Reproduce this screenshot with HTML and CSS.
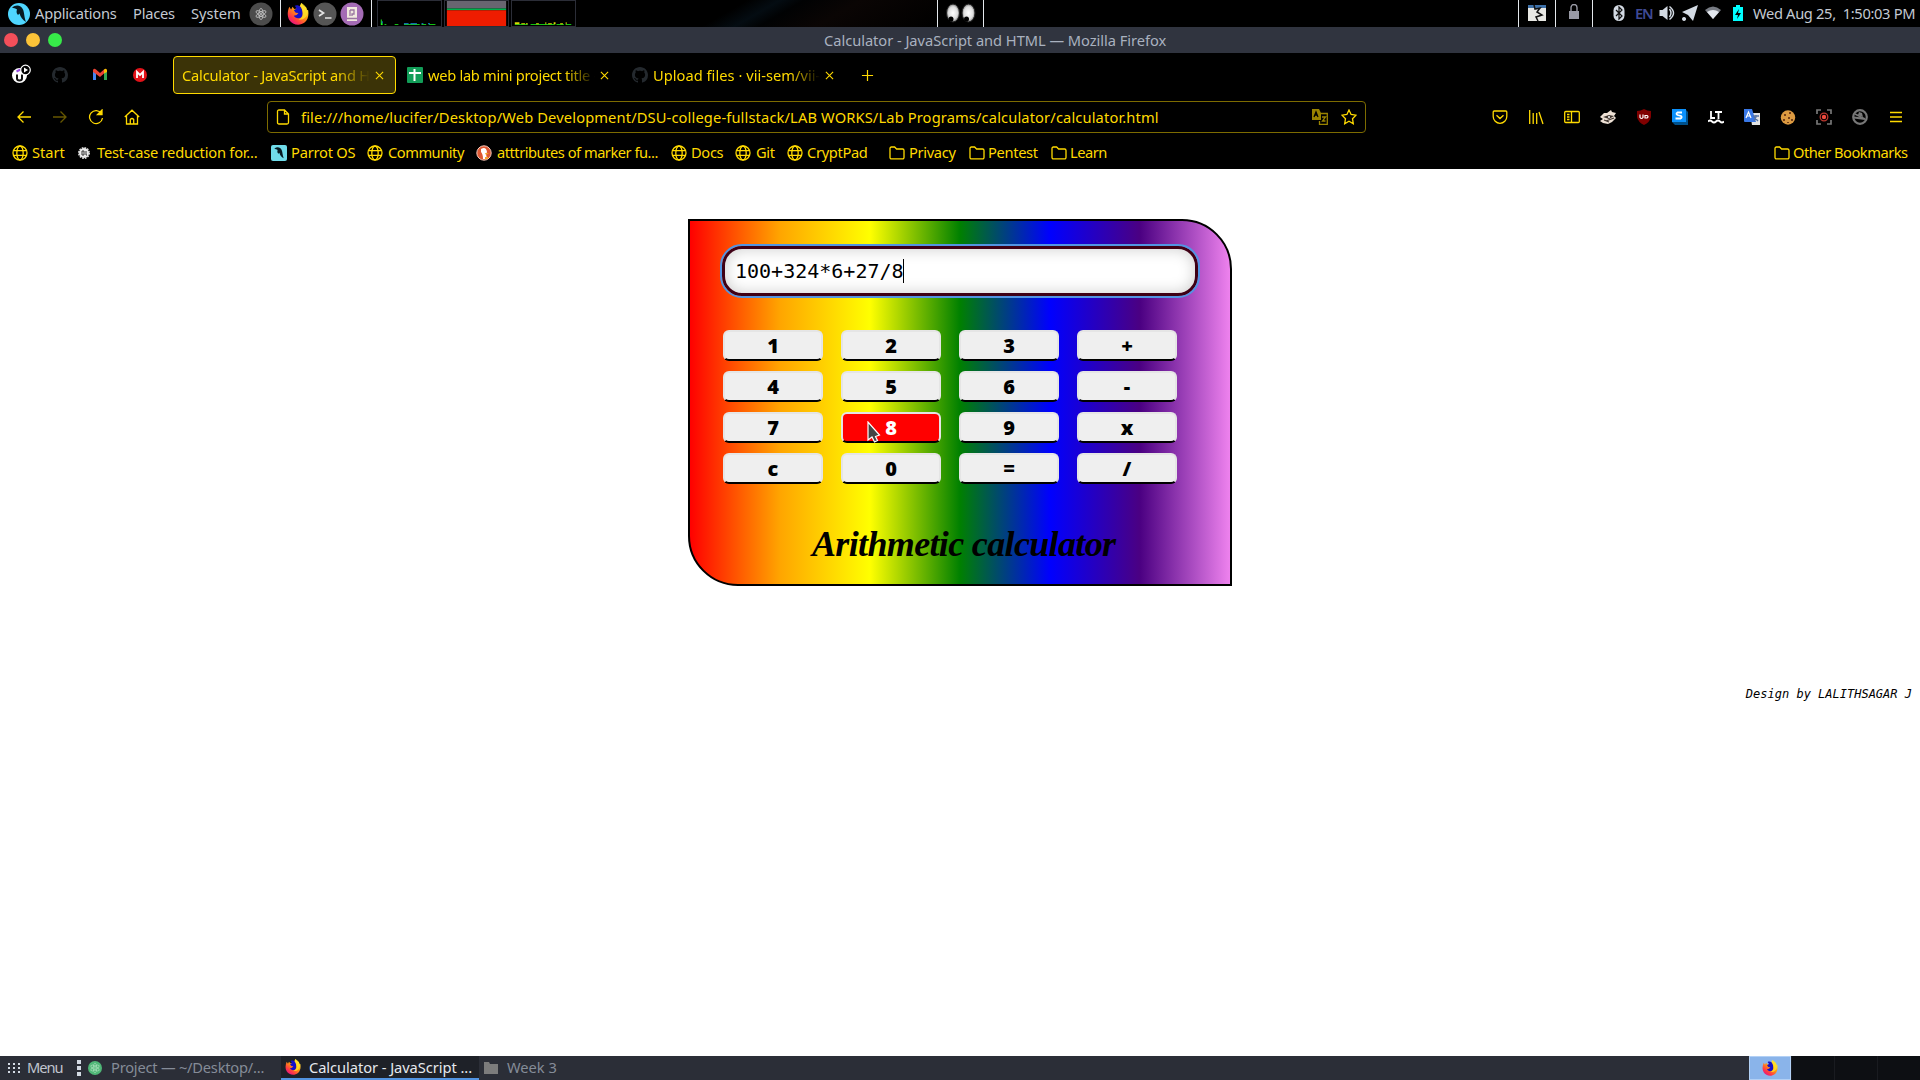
FILE: index.html
```html
<!DOCTYPE html>
<html lang="en">
<head>
<meta charset="utf-8">
<title>Calculator - JavaScript and HTML</title>
<link rel="stylesheet" href="styles.css">
</head>
<body>
<svg class="defs" width="0" height="0" aria-hidden="true">
  <defs>
    <linearGradient id="flame" x1="0.85" y1="0.05" x2="0.2" y2="0.95"><stop offset="0" stop-color="#fff44f"/><stop offset=".45" stop-color="#ff980e"/><stop offset=".8" stop-color="#ff3647"/><stop offset="1" stop-color="#e31587"/></linearGradient>
    <radialGradient id="eye"><stop offset="0" stop-color="#fff"/><stop offset=".7" stop-color="#ddd"/><stop offset="1" stop-color="#777"/></radialGradient>
    <symbol id="globe" viewBox="0 0 16 16"><g fill="none" stroke="currentColor" stroke-width="1.3"><circle cx="8" cy="8" r="7"/><ellipse cx="8" cy="8" rx="3.2" ry="7"/><path d="M1.5 5.7h13M1.5 10.3h13"/></g></symbol>
    <symbol id="folder" viewBox="0 0 16 16"><path d="M1 12.5v-9A1.4 1.4 0 0 1 2.4 2h3.2l2 2h6A1.4 1.4 0 0 1 15 5.4v7.1a1.4 1.4 0 0 1-1.4 1.4H2.4A1.4 1.4 0 0 1 1 12.5z" fill="none" stroke="currentColor" stroke-width="1.3"/></symbol>
    <symbol id="close" viewBox="0 0 10 10"><path d="M1 1l8 8M9 1L1 9" stroke="currentColor" stroke-width="1.2"/></symbol>
    <symbol id="firefox" viewBox="0 0 24 24"><path d="M2.500 4l2 3L6 4l2 2.500 5-1L15.500 0 18 3l3 2 .5 3L23 7.500C24 13 23 18 19.500 21 14 25.500 6 24 2.500 18.500 0 14 .5 9 2.500 4z" fill="url(#flame)"/><path d="M8.500 3C12 1 16 4 16.500 8s1 6-1.500 8c-3 1.500-6.500.5-7.500-2l3-1 2-2-3-.5L7.500 8l3-2z" fill="#1510c8"/><path d="M15.500 0c-1 5 2 7 2 11s-2 6-5 7c5 1 10-3 10-8 0-4-3-8-7-10z" fill="#ffe226" opacity=".8"/></symbol>
    <symbol id="github" viewBox="0 0 16 16"><path fill="#24292e" d="M8 0C3.580 0 0 3.580 0 8c0 3.540 2.290 6.530 5.470 7.590.4.070.55-.17.55-.38 0-.19-.01-.82-.01-1.490-2.010.37-2.530-.49-2.690-.94-.09-.23-.48-.94-.82-1.130-.28-.15-.68-.52-.01-.53.63-.01 1.080.58 1.230.82.72 1.210 1.870.87 2.330.66.07-.52.28-.87.51-1.070-1.780-.2-3.640-.89-3.640-3.950 0-.87.31-1.590.82-2.150-.08-.2-.36-1.020.08-2.120 0 0 .67-.21 2.200.82.64-.18 1.320-.27 2-.27s1.360.09 2 .27c1.530-1.040 2.200-.82 2.200-.82.44 1.100.16 1.920.08 2.120.51.56.82 1.270.82 2.150 0 3.070-1.870 3.750-3.650 3.950.29.25.54.73.54 1.480 0 1.070-.01 1.930-.01 2.200 0 .21.15.46.55.38A8.010 8.010 0 0 0 16 8c0-4.420-3.580-8-8-8z"/></symbol>
    <symbol id="bird" viewBox="0 0 24 24"><path d="M5 5.500C9 2 14 3 16 7.500c1.500 3.500 1 7 3 12.500-3.500-2-5.500-5-6.500-8.500L11 13c-2-2-1.500-4-1-5.500C8.500 6 6.500 6.500 5 5.500z" fill="#071a22"/></symbol>
    <symbol id="atom" viewBox="0 0 20 20"><g fill="none" stroke="currentColor" stroke-width="1.1"><ellipse cx="10" cy="10" rx="3" ry="8"/><ellipse cx="10" cy="10" rx="3" ry="8" transform="rotate(60 10 10)"/><ellipse cx="10" cy="10" rx="3" ry="8" transform="rotate(120 10 10)"/></g><circle cx="10" cy="10" r="1.3" fill="currentColor"/></symbol>
  </defs>
</svg>

<header class="panel">
  <svg class="launcher" viewBox="0 0 24 24"><circle cx="12" cy="12" r="11" fill="#4fd6ff"/><use href="#bird"/></svg>
  <span class="t narrow">Applications</span><span class="t narrow">Places</span><span class="t">System</span>
  <svg class="round atom-dark" viewBox="0 0 24 24"><circle cx="12" cy="12" r="11.5" fill="#4c4c4c"/><use href="#atom" x="5" y="5" width="14" height="14"/></svg>
  <i class="rule"></i>
  <svg class="round" viewBox="0 0 24 24"><use href="#firefox" x="1" y="1" width="22" height="22"/></svg>
  <svg class="round" viewBox="0 0 24 24"><circle cx="12" cy="12" r="11.5" fill="#555"/><path d="M6 8l4.500 3L6 14M12 16h6.500" fill="none" stroke="#e4e4e4" stroke-width="1.7"/></svg>
  <svg class="round" viewBox="0 0 24 24"><circle cx="12" cy="12" r="11.5" fill="#a46bb5"/><path d="M7 5h10v14H7z" fill="#f1e8df"/><path d="M7 16.500h10M10 8v6M10 8h4v4h-2v2" stroke="#9a75a0" stroke-width="1.300" fill="none"/></svg>
  <i class="rule end"></i>
  <svg class="graph first" viewBox="0 0 64 27"><path d="M1 20h1v4h1v2H1zM5 25h2v1H5zM16 25h4v1h-4zM26 25h17v1H26zM45 25h5v1h-5zM53 25h7v1h-7z" fill="#1bff1b"/><path d="M26 24h5v1h-5zM33 24h7v1h-7zM45 24h2v1h-2zM52 24h2v1h-2zM2 22h1v2H2z" fill="#1490e8"/></svg>
  <svg class="graph" viewBox="0 0 64 27"><path fill="#686570" d="M0 0h64v8H0z"/><path fill="#00b04c" d="M0 8h64v2H0z"/><path fill="#ef1c00" d="M0 10h64v17H0z"/></svg>
  <svg class="graph" viewBox="0 0 64 27"><path d="M1 25h14v1H1zM18 25h26v1H18zM46 25h8v1h-8zM56 25h6v1h-6z" fill="#1bff1b"/><path d="M1 23h5v2H1zM8 24h4v1H8zM13 24h2v1h-2zM24 24h3v1h-3zM34 23h1v2h-1zM37 24h4v1h-4zM43 23h2v2h-2zM50 24h3v1h-3zM56 23h1v2h-1z" fill="#d9d900"/></svg>
  <i class="wallpaper"></i>
  <i class="rule"></i>
  <svg class="eyes" viewBox="0 0 45 27"><g fill="url(#eye)" stroke="#222"><ellipse cx="15" cy="13" rx="6.5" ry="9"/><ellipse cx="30.5" cy="13" rx="6.5" ry="9"/></g><ellipse cx="13" cy="19" rx="2.5" ry="2.5"/><ellipse cx="28.5" cy="19" rx="2.5" ry="2.5"/></svg>
  <i class="rule"></i>
  <i></i>
  <i class="rule"></i>
  <svg class="tray" viewBox="0 0 18 18"><path d="M0 1h18v16H0z" fill="#e8e8e4"/><path d="M0 1h18v3H0z" fill="#3d70a8"/><path d="M6 1l1 4 5-1-3 4 5 3-6 2 2 4" fill="none" stroke="#111" stroke-width="1.5"/></svg>
  <i class="rule"></i>
  <svg class="tray" viewBox="0 0 18 18"><path d="M4 7h10v8H4z" fill="#999aa5"/><path d="M6 7V3.500a3 3 0 0 1 6 0V7" fill="none" stroke="#999aa5" stroke-width="1.4"/></svg>
  <i class="rule"></i>
  <svg class="tray bluetooth" viewBox="0 0 18 18"><rect x="3.500" y="1" width="11" height="16" rx="5.5" fill="#d3dae3"/><path d="M6 6l6 6-3 3V3l3 3-6 6" fill="none" stroke="#111" stroke-width="1.2"/></svg>
  <b class="lang t">EN</b>
  <svg class="tray" viewBox="0 0 18 18"><path d="M1.500 6h3l5-4v14l-5-4h-3z" fill="#d3dae3"/><path d="M11.500 5q3 4 0 8M11.500 2.500q8 6.500 0 13" fill="none" stroke="#d3dae3" stroke-width="1.5"/></svg>
  <svg class="tray" viewBox="0 0 18 18"><path d="M17 1L1 8l6 3 5 6zM3 13a2 2 0 1 0 .1 0z" fill="#d3dae3"/></svg>
  <svg class="tray" viewBox="0 0 18 18"><path d="M1 6q8-7 16 0L9 15z" fill="#777b83"/><path d="M3 8q6-4 12 0l-6 7z" fill="#e3e8ee"/></svg>
  <svg class="tray" viewBox="0 0 18 18"><path d="M4 3h3V1h4v2h3v14H4z" fill="#0ff"/><path d="M10 5l-4 6h3l-1 4 4-6H9z"/></svg>
  <span class="t clock">Wed Aug 25,&nbsp; 1:50:03 PM</span>
</header>

<div class="titlebar"><i class="dot red"></i><i class="dot amber"></i><i class="dot green"></i><span class="t">Calculator - JavaScript and HTML — Mozilla Firefox</span></div>

<div class="chrome">
<nav class="tabs">
  <svg class="pin" viewBox="0 0 20 20"><circle cx="9.500" cy="10.500" r="7.500" fill="#fff"/><path d="M7 9.500v4q0 2 2.500 2t2.500-2v-4" fill="none" stroke="#111" stroke-width="2"/><path d="M6.500 6.500l4-2" stroke="#9b4ce5" stroke-width="2"/><circle cx="15.500" cy="5" r="4.800" stroke="#fff" stroke-width="1.2"/><path d="M14 2.500l4 2.500-4 2.500z" fill="#fff"/></svg>
  <svg class="pin" viewBox="0 0 20 20"><use href="#github" x="2" y="2" width="16" height="16"/></svg>
  <svg class="pin" viewBox="0 0 20 20"><path d="M3 5.500V15h3V8z" fill="#4285f4"/><path d="M14 8v7h3V5.500z" fill="#34a853"/><path d="M3 7V5q1-2 3-.500l4 3.500 4-3.500v4L10 12 6 9z" fill="#ea4335"/><path d="M14 8.500v-4Q16 3 17 5v2z" fill="#fbbc04"/></svg>
  <svg class="pin" viewBox="0 0 20 20"><circle cx="10" cy="10" r="7" fill="#e31219"/><path d="M7 13V7l3 3 3-3v6" fill="none" stroke="#fff" stroke-width="1.8"/></svg>
  <div class="tab active"><span class="t label">Calculator - JavaScript and H</span><svg class="x"><use href="#close"/></svg></div>
  <div class="tab"><svg class="fav" viewBox="0 0 16 16"><rect width="16" height="16" rx="1" fill="#129d58"/><path d="M2 6h12M7.500 2v12" stroke="#fff" stroke-width="2"/></svg><span class="t label mid">web lab mini project title -</span><svg class="x"><use href="#close"/></svg></div>
  <div class="tab"><svg class="fav"><use href="#github"/></svg><span class="t label wide">Upload files · vii-sem/vii-c</span><svg class="x"><use href="#close"/></svg></div>
  <svg class="plus" viewBox="0 0 14 14"><path d="M7 1v12M1 7h12" stroke="currentColor" stroke-width="1.3"/></svg>
</nav>

<div class="toolbar">
  <svg class="tool" viewBox="0 0 16 16"><path d="M15 8H2M7.500 2.500L2 8l5.500 5.500"/></svg>
  <svg class="tool off" viewBox="0 0 16 16"><path d="M1 8h13M8.500 2.500L14 8l-5.500 5.500"/></svg>
  <svg class="tool" viewBox="0 0 16 16"><path d="M13.500 4.500A6.500 6.500 0 1 0 14.500 9"/><path d="M9.500 5.500h4.500V1z" fill="currentColor"/></svg>
  <svg class="tool" viewBox="0 0 16 16"><path d="M.8 8L8 1.200 15.200 8M2.500 7v8h11V7M6.300 15v-4.500q1.700-2 3.400 0V15"/></svg>
  <div class="address">
    <svg class="tool small" viewBox="0 0 16 16"><path d="M2.500 2.500q0-1.500 1.500-1.500h5.500L13.500 5v8.500q0 1.500-1.500 1.500H4q-1.500 0-1.500-1.500zM9.500 1v4h4"/></svg>
    <span class="t url">file:///home/lucifer/Desktop/Web Development/DSU-college-fullstack/LAB WORKS/Lab Programs/calculator/calculator.html</span>
    <svg class="tool small dim" viewBox="0 0 16 16"><path d="M0 0h7l2 4v7H0z" fill="currentColor" stroke="none"/><path d="M2 8l2-5 2 5M3 6h2" stroke="#000"/><path d="M9 4.500h6.300v10.800H7.500V12M10 8h3.500l-3 4h3"/></svg>
    <svg class="tool small" viewBox="0 0 16 16"><path d="M8 1l2.100 4.500 4.900.7-3.500 3.500.8 5L8 12.300 3.700 14.700l.8-5L1 6.200l4.900-.7z"/></svg>
  </div>
  <div class="addons">
    <svg class="tool" viewBox="0 0 16 16"><path d="M2.200 2h11.600q1 0 1 1v4.500a6.800 6.800 0 0 1-13.600 0V3q0-1 1-1zM4.500 6.200L8 9.500l3.500-3.300"/></svg>
    <svg class="tool" viewBox="0 0 16 16"><path d="M1.700 1v14M5.200 4v11M8.700 4v11M11 3l4 12"/></svg>
    <svg class="tool" viewBox="0 0 16 16"><rect x=".7" y="2.500" width="14.600" height="11" rx="1"/><path d="M7.500 2.500v11M3 5.500h2.500M3 8h2.500M3 10.500h2.500"/></svg>
    <svg class="tool art" viewBox="0 0 16 16"><path d="M0 8l4-4 3 0 4-3 1 2 4 1-2 3 2 2-4 4-4 2-5-1-3-2 3-2z" fill="#eee1d5"/><path d="M3 8l6-2 5 1-5 3zM5 6l4-3" fill="#403630"/><path d="M6 12l8-3M4 11l5 2" stroke="#403630" fill="none"/><circle cx="9" cy="8" r="1" fill="#fff"/></svg>
    <svg class="tool art" viewBox="0 0 16 16"><path d="M8 0q3 2 7 2v6q-1 5-7 8-6-3-7-8V2q4 0 7-2z" fill="#800000"/><path d="M4 5.500v3q1.500 2 3 0v-3M9 6.500h2q2 1 0 2.500H9z" fill="none" stroke="#fff" stroke-width="1.2"/></svg>
    <svg class="tool art" viewBox="0 0 16 16"><path d="M0 0h13l3 3v13H3l-3-3z" fill="#00508a"/><path d="M0 0h14v13H0z" fill="#0c91fb"/><path d="M10 3.500H5.500q-2 1.200 0 2.500l3.500 1q1.500 1.200-.5 2.500h-5" fill="none" stroke="#fff" stroke-width="1.8"/></svg>
    <svg class="tool art" viewBox="0 0 16 16"><path d="M3 2v7h4M7 3h7M10.500 3v7M0 12.500q2-2 4 0t4 0 4 0 4 0" fill="none" stroke="#fff" stroke-width="1.8"/></svg>
    <svg class="tool art" viewBox="0 0 16 16"><path d="M6 4h10v12H8z" fill="#e3e3e3"/><path d="M0 0h8l4 13H1q-1 0-1-1z" fill="#3978e7"/><path d="M2 9l2.500-6L7 9M3 7h3" fill="none" stroke="#fff" stroke-width="1.2"/><path d="M9 7h6M12 6v2l-2 4M10 8l4 4" fill="none" stroke="#5572a5"/></svg>
    <svg class="tool art" viewBox="0 0 16 16"><circle cx="8" cy="8.500" r="7.200" fill="#dc9a41"/><path d="M4 5h2v2H4zM9 3h2v2H9zM8 8h2v2H8zM3 10h2v2H3zM11 10h2v2h-2zM7 13h2v1H7z" fill="#754019"/></svg>
    <svg class="tool art" viewBox="0 0 16 16"><path d="M1 5V1h4M11 1h4v4M15 11v4h-4M5 15H1v-4" fill="none" stroke="#777" stroke-width="1.7"/><circle cx="8" cy="8" r="3.800" fill="none" stroke="#bc382f"/><circle cx="8" cy="8" r="2.200" fill="#f24a3d"/></svg>
    <svg class="tool art" viewBox="0 0 16 16"><circle cx="8" cy="8" r="6.800" fill="none" stroke="#777" stroke-width="2.2"/><path d="M3 5q4 2 10 5M2 8.500l11 1.500" stroke="#777" stroke-width="1.800" fill="none"/><path d="M6 6l1-3 3 1 1 4z" fill="#777"/></svg>
    <svg class="tool" viewBox="0 0 16 16"><path d="M2 3.500h12M2 8h12M2 12.500h12"/></svg>
  </div>
</div>

<div class="bookmarks">
  <svg><use href="#globe"/></svg><span class="t">Start</span>
  <svg viewBox="0 0 16 16"><circle cx="8" cy="8" r="5" fill="#eee" stroke="#ddd" stroke-width="2" stroke-dasharray="1.600 1"/><path d="M6 6h2v4H6zM10 6v4h1" fill="none" stroke="#333"/></svg><span class="t narrow">Test-case reduction for...</span>
  <svg viewBox="0 0 16 16"><rect width="16" height="16" rx="2" fill="#70dcea"/><use href="#bird" width="16" height="16"/></svg><span class="t narrow">Parrot OS</span>
  <svg><use href="#globe"/></svg><span class="t tight">Community</span>
  <svg viewBox="0 0 16 16"><circle cx="8" cy="8" r="7.200" fill="#de5833" stroke="#f4c8bb"/><path d="M5 4q5-3 6 3l-1 2 1 5H7q0-5-2-7z" fill="#fff"/><path d="M9 8h4l-3 2zM9 12h3v2H9z" fill="#f6a32a"/></svg><span class="t tight">atttributes of marker fu...</span>
  <svg><use href="#globe"/></svg><span class="t mid">Docs</span>
  <svg><use href="#globe"/></svg><span class="t mid">Git</span>
  <svg><use href="#globe"/></svg><span class="t mid">CryptPad</span>
  <svg><use href="#folder"/></svg><span class="t mid">Privacy</span>
  <svg><use href="#folder"/></svg><span class="t mid">Pentest</span>
  <svg><use href="#folder"/></svg><span class="t tight">Learn</span>
  <svg><use href="#folder"/></svg><span class="t tight">Other Bookmarks</span>
</div>
</div>

<main class="page">
  <section class="calculator">
    <div class="display"><span class="t">100+324*6+27/8</span><i class="caret"></i></div>
    <div class="keys">
      <button>1</button><button>2</button><button>3</button><button>+</button>
      <button>4</button><button>5</button><button>6</button><button>-</button>
      <button>7</button><button class="pressed">8<svg class="cursor" viewBox="0 0 14 22"><path d="M1 1v18l4-3 2.500 5 3-1.500-2-4 4-1.500z" fill="#444" stroke="#fff" stroke-width="1.2"/></svg></button><button>9</button><button>x</button>
      <button>c</button><button>0</button><button>=</button><button>/</button>
    </div>
    <h1>Arithmetic calculator</h1>
  </section>
  <p class="credit">Design by LALITHSAGAR J</p>
</main>

<footer class="taskbar">
  <svg viewBox="0 0 16 16"><path d="M2 4h12M2 8h12M2 12h12" stroke="#d3dae3" stroke-width="2" stroke-dasharray="2 3"/></svg>
  <span class="t menu">Menu</span>
  <svg class="grip" viewBox="0 0 4 16"><path d="M2 0v16" stroke="#d3dae3" stroke-width="4" stroke-dasharray="4 2"/></svg>
  <div class="task muted"><svg viewBox="0 0 16 16"><circle cx="8" cy="8" r="7" fill="#4fb777"/><use href="#atom" x="2" y="2" width="12" height="12" color="#a8dfba"/></svg><span class="t narrow">Project — ~/Desktop/...</span></div>
  <div class="task current"><svg><use href="#firefox" width="16" height="16"/></svg><span class="t">Calculator - JavaScript ...</span></div>
  <div class="task muted"><svg viewBox="0 0 16 16"><path d="M1 2h5l1 2h8v10H1z" fill="#7c7c7c"/></svg><span class="t">Week 3</span></div>
  <div class="spaces"><i class="on"><svg viewBox="0 0 24 24"><use href="#firefox"/></svg></i><i></i><i></i><i></i></div>
</footer>
</body>
</html>
```
FILE: styles.css
```css
* { box-sizing: border-box; }
body { margin: 0; width: 1920px; height: 1080px; overflow: hidden; display: flex; flex-direction: column; background: #fff; font: 14.67px/20px "Noto Sans", sans-serif; }
svg { display: block; }
.defs { position: absolute; }
.t { white-space: pre; }
.narrow { letter-spacing: -.22px; }
.mid { letter-spacing: -.33px; }
.tight { letter-spacing: -.48px; }

/* desktop panel */
.panel { height: 27px; background: #000; color: #c3c9d2; display: grid; align-items: center;
  grid-template-columns: 35px 98px 58px 57px 32px 1px 34px 20px 34px 3px 72px 67px 66px 360px 1px 45px 1px 534px 1px 36px 1px 36px 1px 42px 23px 18px 28px 18px 31px 1fr; }
.panel .t { padding-bottom: 2px; }
.launcher { width: 24px; height: 24px; margin-left: 7px; }
.round { width: 24px; height: 24px; justify-self: center; color: #ccc; }
.atom-dark { justify-self: start; margin-left: 1px; }
.rule { width: 1px; height: 27px; background: #e4e8ec; }
.end { justify-self: end; }
.graph { width: 65px; height: 27px; border: 1px solid #2b2d37; }
.first { margin-left: 5px; }
.wallpaper { height: 27px; background: linear-gradient(150deg, #000 42%, #040c12 50%, #010203 56%, #0a0504 70%, #000); }
.eyes { width: 45px; height: 27px; }
.tray { width: 18px; height: 18px; justify-self: center; margin-bottom: 1px; }
.bluetooth { margin-left: 10px; }
.lang { color: #3f4a94; font-weight: 600; letter-spacing: -1.2px; }
.clock { letter-spacing: -.33px; }

.titlebar { height: 26px; background: #30343f; color: #a9b1bf; display: flex; align-items: center; padding-left: 4px; gap: 8px; }
.dot { width: 14px; height: 14px; border-radius: 50%; }
.red { background: #f44f5a; } .amber { background: #fcc338; } .green { background: #37ea49; }
.titlebar .t { margin-left: 754px; letter-spacing: -.04px; }

/* browser chrome */
.chrome { background: #000; color: #ffda00; height: 116px; }
.tabs { height: 44px; display: flex; align-items: center; padding-left: 10px; }
.pin { width: 20px; height: 20px; margin-right: 20px; overflow: visible; }
.tab { width: 225px; height: 38px; display: flex; align-items: center; padding: 0 14px 0 9px; gap: 5px; }
.tab.active { width: 223px; margin: 0 2px 0 3px; border: 1px solid #ffda00; border-radius: 4px; background: #3b3307; padding: 0 11px 0 8px; }
.fav { width: 16px; height: 16px; flex: none; }
.label { flex: 1; min-width: 0; padding-bottom: 1px; -webkit-mask-image: linear-gradient(90deg, #000 82%, transparent); mask-image: linear-gradient(90deg, #000 82%, transparent); }
.active .label { letter-spacing: -.2px; }
.tab .mid { letter-spacing: -.3px; }
.wide { letter-spacing: .02px; }
.x { width: 9px; height: 9px; flex: none; }
.plus { width: 13px; height: 13px; margin-left: 13px; }
.toolbar { height: 40px; display: flex; align-items: center; padding-left: 16px; }
.tool { width: 16px; height: 16px; margin-right: 20px; fill: none; stroke: currentColor; stroke-width: 1.3; flex: none; }
.art { stroke: none; }
.off { opacity: .4; }
.dim { opacity: .6; }
.address { width: 1099px; flex: none; height: 32px; margin-left: 107px; border: 1px solid #7d6b00; border-radius: 4px; display: flex; align-items: center; padding: 0 8px 0 7px; }
.small { margin-right: 10px; }
.address .tool:last-child { margin-right: 0; margin-left: 3px; }
.url { flex: 1; letter-spacing: .135px; padding-bottom: 1px; }
.addons { display: flex; margin-left: 126px; }
.bookmarks { height: 32px; display: grid; align-items: center; grid-template-columns: 20px 44px 21px 174px 20px 76px 21px 88px 21px 174px 20px 44px 21px 31px 20px 82px 20px 60px 19px 63px 19px 704px 19px 1fr; padding-left: 12px; }
.bookmarks svg { width: 16px; height: 16px; }
.bookmarks .t { padding-bottom: 2px; }

/* page */
.page { height: 887px; flex: none; background: #fff; display: flex; flex-direction: column; }
.calculator { width: 544px; height: 367px; margin: 50px auto 0; border: 2px solid #000; border-radius: 0 50px 0 50px; background: linear-gradient(to right, red, orange, yellow, green, blue, indigo, violet); padding: 25px 0 0 32px; }
.display { width: 476px; height: 50px; border: 3px solid #3f0015; border-radius: 20px; outline: 2px solid #5294e2; background: #fff; box-shadow: inset 0 0 15px #ccc; display: flex; align-items: center; padding-left: 10px; font: 20px "DejaVu Sans Mono", monospace; }
.caret { width: 1px; height: 24px; background: #000; margin-left: -1px; }
.keys { display: grid; grid-template-columns: repeat(4, 100px); gap: 10px 18px; margin: 34px 0 0 1px; }
.keys button { height: 31px; padding: 0; border: 2px solid #e5e5e5; border-bottom-color: #000; border-radius: 6px; background: #efefef; color: #000; font: 900 20px "Noto Sans", sans-serif; line-height: 27px; }
.keys .pressed { position: relative; background: red; color: #fff; }
.cursor { position: absolute; left: 24px; top: 7px; width: 14px; height: 22px; }
h1 { margin: 35px 0 0; padding-left: 90px; white-space: pre; font: italic bold 36px/50px "Z003", "URW Chancery L", "Liberation Serif", cursive; letter-spacing: -.65px; }
.credit { margin: 100px 8px 0 0; text-align: right; font: italic 12px/16px "DejaVu Sans Mono", monospace; }

/* bottom panel */
.taskbar { height: 24px; background: #2b2e37; color: #c0c5ce; display: flex; align-items: center; }
.taskbar > svg { width: 16px; height: 16px; margin: 0 5px 0 6px; }
.taskbar > .t { width: 50px; }
.taskbar .t { padding-bottom: 2px; }
.menu { letter-spacing: -1px; }
.taskbar > .grip { width: 4px; height: 16px; margin: 0 6px 0 0; }
.task { height: 24px; display: flex; align-items: center; gap: 8px; }
.task svg { width: 16px; height: 16px; flex: none; }
.muted { color: #858c98; width: 194px; }
.current { width: 198px; background: #1e2128; color: #e6e9ee; border-bottom: 2px solid #5294e2; padding-left: 4px; }
.taskbar .current .t { padding: 0; letter-spacing: -.06px; }
.current + .muted { margin-left: 4px; }
.spaces { display: grid; grid-template-columns: 42px 43px 43px 43px; margin-left: auto; height: 24px; }
.spaces i { background: #0d0f13; border-left: 1px solid #191b20; }
.spaces .on { background: #8ab4ea; border: 1px solid #b2d0f5; display: flex; align-items: center; justify-content: center; }
.on svg { width: 16px; height: 16px; }
```
